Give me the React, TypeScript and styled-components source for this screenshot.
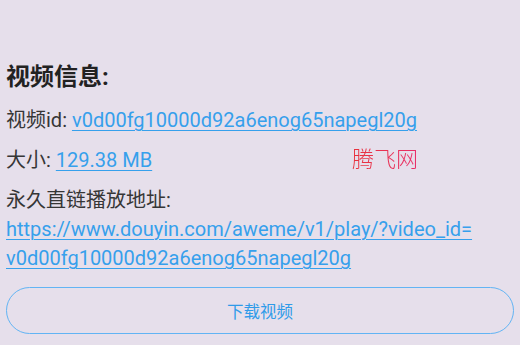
import React from "react";
import styled, { createGlobalStyle } from "styled-components";

const Global = createGlobalStyle`
  html, body { margin: 0; padding: 0; background: #e6dfeb; }
  body { font-family: Roboto, "Noto Sans CJK SC", sans-serif; }
`;

const Page = styled.div`
  position: relative;
  box-sizing: border-box;
  width: 520px;
  height: 345px;
  padding: 60px 6px 0 6px;
  overflow: hidden;
  color: #333;
`;

const Heading = styled.h2`
  margin: 0 0 12px 0;
  font-size: 24px;
  font-weight: 700;
  line-height: 34px;
  color: #222;
`;

const Row = styled.p`
  margin: 0 0 11px 0;
  font-size: 20px;
  line-height: 29px;
  color: #363636;
`;

const Link = styled.a`
  color: #36a0ec;
  text-decoration: underline;
  text-decoration-thickness: 1px;
  text-underline-offset: 3px;
`;

const Watermark = styled.span`
  position: absolute;
  left: 352px;
  top: 143px;
  font-family: "Noto Sans CJK SC", sans-serif;
  font-size: 22px;
  font-weight: 300;
  line-height: 28px;
  background: linear-gradient(90deg, #e8323c, #e9306a);
  -webkit-background-clip: text;
  background-clip: text;
  color: transparent;
`;

const Button = styled.button`
  display: block;
  box-sizing: border-box;
  width: 100%;
  height: 47px;
  margin-top: 14px;
  border: 1px solid #62b4f4;
  border-radius: 24px;
  background: transparent;
  color: #2f9be9;
  font-family: "Noto Sans CJK SC", Roboto, sans-serif;
  font-size: 16.5px;
`;

const id = "v0d00fg10000d92a6enog65napegl20g";

export default function App() {
  return (
    <>
      <Global />
      <Page>
        <Heading>视频信息:</Heading>
        <Row>
          视频id: <Link href="#">{id}</Link>
        </Row>
        <Row>
          大小: <Link href="#">129.38 MB</Link>
        </Row>
        <Row style={{ marginBottom: 0 }}>
          永久直链播放地址:
          <br />
          <Link href="#">
            https://www.douyin.com/aweme/v1/play/?video_id=<wbr />
            {id}
          </Link>
        </Row>
        <Button>下载视频</Button>
        <Watermark>腾飞网</Watermark>
      </Page>
    </>
  );
}
